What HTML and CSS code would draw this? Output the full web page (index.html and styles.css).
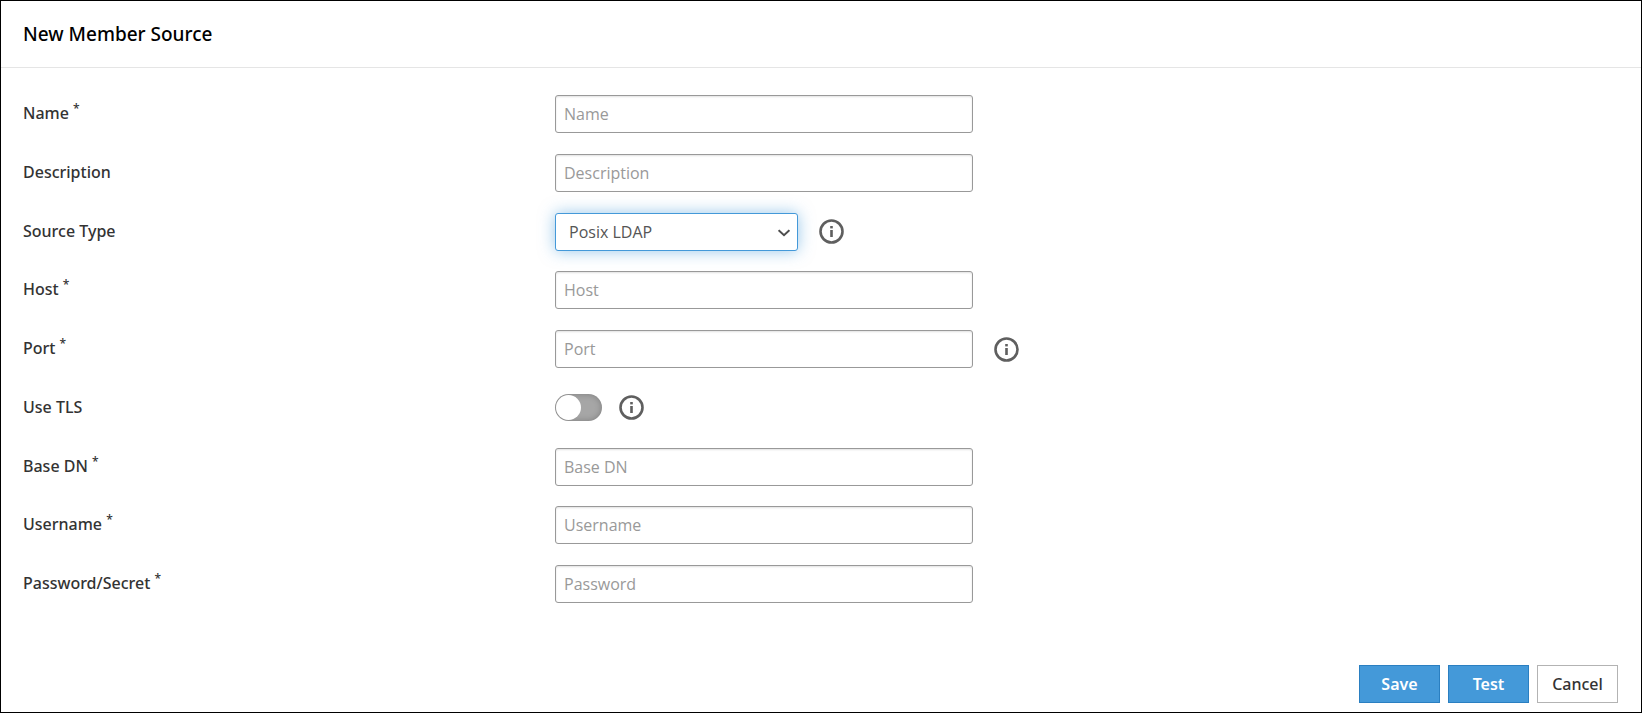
FILE: index.html
```
<!DOCTYPE html>
<html lang="en">
<head>
<meta charset="UTF-8">
<meta name="viewport" content="width=device-width, initial-scale=1.0">
<title>New Member Source</title>
<link rel="stylesheet" href="styles.css">
</head>
<body>
<!-- Shared info icon -->
<svg class="sprite" width="0" height="0" aria-hidden="true">
  <symbol id="info" viewBox="0 0 25 25">
    <circle cx="12.5" cy="12.5" r="11" fill="none" stroke="#5f5f5f" stroke-width="2.6"/>
    <rect x="11.2" y="7" width="2.6" height="2.4" fill="#5f5f5f"/>
    <rect x="11.2" y="11" width="2.6" height="7" fill="#5f5f5f"/>
  </symbol>
</svg>
<form class="panel">
  <header class="panel-header">
    <h1>New Member Source</h1>
  </header>
  <div class="fields">
    <div class="row">
      <label for="name">Name <sup>*</sup></label>
      <div class="control"><input class="text" type="text" id="name" placeholder="Name"></div>
    </div>
    <div class="row">
      <label for="description">Description</label>
      <div class="control"><input class="text" type="text" id="description" placeholder="Description"></div>
    </div>
    <div class="row">
      <label for="type">Source Type</label>
      <div class="control">
        <div class="select-wrap">
          <select class="select" id="type">
            <option>Posix LDAP</option>
          </select>
          <svg class="chevron" viewBox="0 0 12 8" aria-hidden="true"><path d="M0.6 1.2 L6 6.2 L11.4 1.2" fill="none" stroke="#4d4d4d" stroke-width="2"/></svg>
        </div>
        <button type="button" class="info" aria-label="About source type"><svg><use href="#info"/></svg></button>
      </div>
    </div>
    <div class="row">
      <label for="host">Host <sup>*</sup></label>
      <div class="control"><input class="text" type="text" id="host" placeholder="Host"></div>
    </div>
    <div class="row">
      <label for="port">Port <sup>*</sup></label>
      <div class="control">
        <input class="text" type="text" id="port" placeholder="Port">
        <button type="button" class="info" aria-label="About port"><svg><use href="#info"/></svg></button>
      </div>
    </div>
    <div class="row">
      <label for="tls">Use TLS</label>
      <div class="control control-tight">
        <input class="toggle" type="checkbox" id="tls">
        <button type="button" class="info" aria-label="About TLS"><svg><use href="#info"/></svg></button>
      </div>
    </div>
    <div class="row">
      <label for="basedn">Base DN <sup>*</sup></label>
      <div class="control"><input class="text" type="text" id="basedn" placeholder="Base DN"></div>
    </div>
    <div class="row">
      <label for="username">Username <sup>*</sup></label>
      <div class="control"><input class="text" type="text" id="username" placeholder="Username"></div>
    </div>
    <div class="row">
      <label for="password">Password/Secret <sup>*</sup></label>
      <div class="control"><input class="text" type="password" id="password" placeholder="Password"></div>
    </div>
  </div>
  <footer class="actions">
    <button type="submit" class="btn btn-primary">Save</button>
    <button type="button" class="btn btn-primary">Test</button>
    <button type="button" class="btn">Cancel</button>
  </footer>
</form>
</body>
</html>
```
FILE: styles.css
```
* {
  box-sizing: border-box;
}

body {
  margin: 0;
  font-family: "Noto Sans", "Open Sans", sans-serif;
  font-size: 16px;
  color: #333;
  background-color: #fff;
}

.sprite {
  position: absolute;
}

.panel {
  display: flex;
  flex-direction: column;
  min-height: 100vh;
  border: 1px solid #000;
}

.panel-header {
  padding: 20px 22px;
  border-bottom: 1px solid #e5e5e5;
}

.panel-header h1 {
  margin: 0;
  font-size: 19px;
  font-weight: 500;
  line-height: 26px;
  color: #000;
}

.fields {
  flex: 1;
  display: flex;
  flex-direction: column;
  justify-content: space-between;
  gap: 20px;
  padding: 27px 22px 0;
}

.row {
  display: grid;
  grid-template-columns: 1fr 2fr;
}

.row label {
  padding-top: 6px;
  font-weight: 500;
  line-height: 24px;
}

.row sup {
  font-size: 12px;
  line-height: 0;
}

.control {
  display: flex;
  align-items: center;
  gap: 21px;
  min-height: 38px;
}

.control-tight {
  gap: 17px;
}

.text,
.select {
  height: 38px;
  border: 1px solid #999;
  border-radius: 3px;
  background-color: #fff;
  font-family: "Open Sans", "Noto Sans", sans-serif;
  font-size: 16px;
  color: #555;
}

.text {
  width: 418px;
  padding: 0 8px;
  box-shadow: inset 0 1px 2px rgba(0, 0, 0, 0.12);
}

.text::placeholder {
  color: #999;
}

.select-wrap {
  position: relative;
  width: 243px;
}

.select {
  display: block;
  width: 100%;
  padding: 0 32px 0 13px;
  appearance: none;
  border-color: #4499d9;
  box-shadow: 0 0 16px rgba(68, 153, 217, 0.55);
}

.chevron {
  position: absolute;
  top: 16px;
  right: 8px;
  width: 12px;
  height: 8px;
  pointer-events: none;
}

.info {
  width: 25px;
  height: 25px;
  padding: 0;
  border: 0;
  background: none;
}

.info svg {
  display: block;
  width: 25px;
  height: 25px;
}

.toggle {
  display: flex;
  align-items: center;
  width: 47px;
  height: 27px;
  margin: 0;
  padding: 0 1px;
  appearance: none;
  border-radius: 14px;
  background-color: #a6a6a6;
  box-shadow: inset 0 0 6px rgba(0, 0, 0, 0.25);
}

.toggle::before {
  content: "";
  width: 25px;
  height: 25px;
  border-radius: 50%;
  background-color: #fff;
}

.toggle:checked {
  justify-content: flex-end;
  background-color: #4499d9;
}

.actions {
  display: flex;
  justify-content: flex-end;
  gap: 8px;
  padding: 62px 23px 9px;
}

.btn {
  min-width: 81px;
  height: 38px;
  padding: 0 13px;
  border: 1px solid #b3b3b3;
  background-color: #fff;
  font-family: inherit;
  font-size: 16px;
  font-weight: 500;
  color: #333;
}

.btn-primary {
  border-color: #2a7fc1;
  background-color: #4499d9;
  font-weight: 600;
  color: #fff;
}
```
